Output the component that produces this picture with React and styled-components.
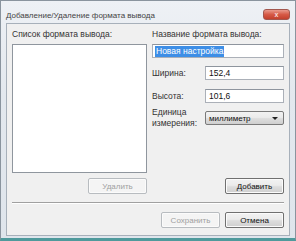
import React from 'react';
import styled, { createGlobalStyle } from 'styled-components';

const GlobalStyle = createGlobalStyle`
  html, body { margin: 0; padding: 0; background: #ffffff; }
  body { font-family: "Liberation Sans", Arial, sans-serif; }
`

const Window = styled.div`
  width: 296px;
  height: 241px;
  box-sizing: border-box;
  display: flex;
  flex-direction: column;
  background: linear-gradient(#eef1f5, #e3e8ee 40%, #dfe5ec);
  border: 1px solid #8a949e;
  border-bottom: 3px solid #4f9a9c;
  padding: 0 5px 4px 5px;
`

const TitleBar = styled.div`
  height: 22px;
  flex: none;
  display: flex;
  align-items: center;
  justify-content: space-between;
  padding-top: 1px;
  box-sizing: border-box;
`

const Title = styled.span`
  font-size: 8px;
  color: #444;
  margin-top: 6px;
`

const CloseButton = styled.div`
  width: 25px;
  height: 9px;
  margin-top: 4px;
  border-radius: 3px;
  border: 1px solid #a2574e;
  background: linear-gradient(#e99a8d, #d65a46 50%, #c3402d);
  color: #f6dcd8;
  font-size: 7px;
  line-height: 9px;
  text-align: center;
  font-weight: bold;
`

const Panel = styled.div`
  flex: 1;
  background: #f0f0f0;
  border: 1px solid #a7b0ba;
  padding: 5px 5px 7px 5px;
  display: flex;
  flex-direction: column;
`

const Columns = styled.div`
  display: flex;
  gap: 5px;
`

const LeftColumn = styled.div`
  width: 135px;
  display: flex;
  flex-direction: column;
`

const RightColumn = styled.div`
  flex: 1;
  display: flex;
  flex-direction: column;
`

const Label = styled.div`
  font-size: 8.5px;
  line-height: 11px;
  color: #333;
  height: 11px;
  margin-bottom: 4px;
`

const ListBox = styled.div`
  height: 129px;
  background: #fff;
  border: 1px solid #8f969e;
  box-sizing: border-box;
`

const Button = styled.button`
  width: 59px;
  height: 16px;
  padding: 0;
  font-family: "Liberation Sans", Arial, sans-serif;
  font-size: 8px;
  border-radius: 2px;
  border: 1px solid ${p => p.disabled ? '#b8bcc0' : '#707070'};
  background: ${p => p.disabled ? '#f4f4f4' : 'linear-gradient(#f2f2f2, #ebebeb 45%, #dddddd 55%, #cfcfcf)'};
  color: ${p => p.disabled ? '#a0a0a0' : '#111'};
  box-shadow: inset 0 0 0 1px #fbfbfb;
`

const ButtonRow = styled.div`
  display: flex;
  justify-content: flex-end;
  gap: 5px;
  margin-top: ${p => p.$push ? 'auto' : `${p.$top || 0}px`};
`

const TextInput = styled.div`
  height: 14px;
  box-sizing: border-box;
  background: #fff;
  border: 1px solid #abb0b8;
  border-top-color: #8e959e;
  font-size: 8.5px;
  line-height: 12px;
  padding-left: 2px;
  color: #111;
  display: flex;
  align-items: center;
`

const Selected = styled.span`
  background: #3d8ee6;
  color: #fff;
  line-height: 11px;
  padding: 0 1px;
`

const FieldRow = styled.div`
  display: flex;
  align-items: center;
  margin-top: ${p => p.$top}px;
`

const FieldLabel = styled.div`
  width: 53px;
  flex: none;
  font-size: 8.5px;
  line-height: 11px;
  color: #333;
`

const FieldInput = styled(TextInput)`
  flex: 1;
  padding-left: 3px;
`

const Select = styled.div`
  flex: 1;
  height: 14px;
  box-sizing: border-box;
  border: 1px solid #7a7a7a;
  border-radius: 2px;
  background: linear-gradient(#f2f2f2, #ebebeb 45%, #dddddd 55%, #cfcfcf);
  display: flex;
  align-items: center;
  justify-content: space-between;
  padding: 0 5px 0 3px;
  font-size: 8px;
  color: #111;
`

const Arrow = styled.span`
  width: 0;
  height: 0;
  border-left: 3px solid transparent;
  border-right: 3px solid transparent;
  border-top: 3px solid #222;
`

const Separator = styled.div`
  margin-top: 8px;
  height: 0;
  border-top: 1px solid #a0a0a0;
  border-bottom: 1px solid #ffffff;
`

export default function App() {
  return (
    <>
      <GlobalStyle />
      <Window>
        <TitleBar>
          <Title>Добавление/Удаление формата вывода</Title>
          <CloseButton>x</CloseButton>
        </TitleBar>
        <Panel>
          <Columns>
            <LeftColumn>
              <Label>Список формата вывода:</Label>
              <ListBox />
              <ButtonRow $top={5}>
                <Button disabled>Удалить</Button>
              </ButtonRow>
            </LeftColumn>
            <RightColumn>
              <Label>Название формата вывода:</Label>
              <TextInput><Selected>Новая настройка</Selected></TextInput>
              <FieldRow $top={8}>
                <FieldLabel>Ширина:</FieldLabel>
                <FieldInput>152,4</FieldInput>
              </FieldRow>
              <FieldRow $top={9}>
                <FieldLabel>Высота:</FieldLabel>
                <FieldInput>101,6</FieldInput>
              </FieldRow>
              <FieldRow $top={4}>
                <FieldLabel>Единица<br />измерения:</FieldLabel>
                <Select>миллиметр<Arrow /></Select>
              </FieldRow>
              <ButtonRow $push>
                <Button>Добавить</Button>
              </ButtonRow>
            </RightColumn>
          </Columns>
          <Separator />
          <ButtonRow $top={8}>
            <Button disabled>Сохранить</Button>
            <Button>Отмена</Button>
          </ButtonRow>
        </Panel>
      </Window>
    </>
  );
}
